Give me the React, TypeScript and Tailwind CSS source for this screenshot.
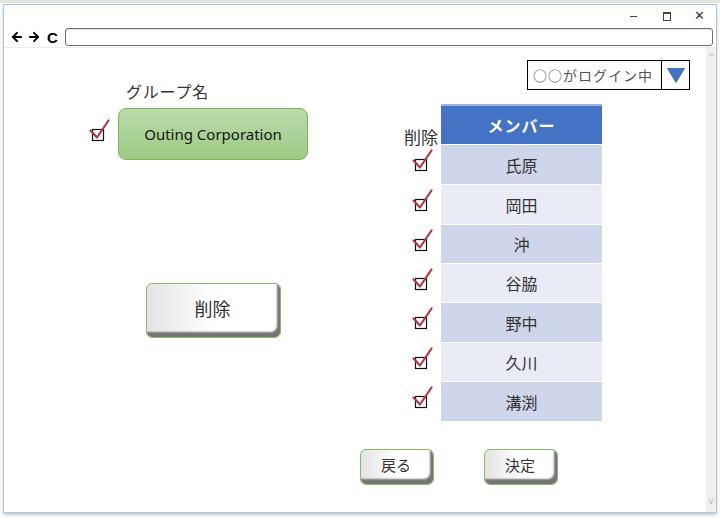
import React from "react";
import { ArrowLeft, ArrowRight } from "lucide-react";

const jp = "font-['Noto_Sans_CJK_JP',sans-serif]";

const members = [
  { name: "氏原", h: "h-[40px]", bg: "bg-[#cfd5ea]" },
  { name: "岡田", h: "h-[40px]", bg: "bg-[#e9ebf5]" },
  { name: "沖", h: "h-[39px]", bg: "bg-[#cfd5ea]" },
  { name: "谷脇", h: "h-[39px]", bg: "bg-[#e9ebf5]" },
  { name: "野中", h: "h-[40px]", bg: "bg-[#cfd5ea]" },
  { name: "久川", h: "h-[39px]", bg: "bg-[#e9ebf5]" },
  { name: "溝渕", h: "h-[40px]", bg: "bg-[#cfd5ea]" },
];

function Check() {
  return (
    <svg width="22" height="30" viewBox="0 0 22 30" className="shrink-0">
      <rect x="3.5" y="10.5" width="11" height="11" fill="white" stroke="#111" strokeWidth="1.2" />
      <path d="M1.5 11.5 L8 18.5 L19.5 1.5" fill="none" stroke="#ad3b47" strokeWidth="2.2" strokeLinecap="round" strokeLinejoin="round" />
    </svg>
  );
}

function Btn3d({ label, className }: { label: string; className: string }) {
  return (
    <button
      className={`${className} ${jp} flex items-center justify-center rounded-[6px] border border-[#86bd68] bg-gradient-to-r from-[#e4e4e4] via-white to-white text-[#333] shadow-[inset_-4px_-6px_2px_-1px_#747474]`}
    >
      <span className="-mt-[4px] -ml-[2px]">{label}</span>
    </button>
  );
}

export default function App() {
  return (
    <div className="w-[720px] h-[518px] bg-white overflow-hidden">
      <div className="h-[3px] bg-[#e4e4e4]" />
      <div className="ml-[3px] mt-[1px] w-[714px] h-[509px] border border-[#a9c8e8] bg-white shadow-[0_2px_3px_rgba(0,0,0,0.22)] flex flex-col">
        {/* title bar */}
        <div className="h-[22px] flex justify-end items-center text-[#333] font-['Liberation_Sans',sans-serif]">
          <span className="w-[33px] flex justify-center">
            <span className="w-[7px] h-px bg-[#444]" />
          </span>
          <span className="w-[33px] flex justify-center">
            <span className="w-[8px] h-[9px] border border-[#444] border-t-2" />
          </span>
          <span className="w-[33px] text-center text-[13px]">✕</span>
        </div>
        {/* nav bar */}
        <div className="h-[21px] flex items-center pl-[6px] pr-[3px] border-b border-[#ececec]">
          <ArrowLeft size={14} strokeWidth={3.4} className="text-black" />
          <ArrowRight size={14} strokeWidth={3.4} className="text-black ml-[3px]" />
          <span className="ml-[6px] text-[15px] font-bold leading-none font-['Liberation_Sans',sans-serif]">C</span>
          <div className="ml-[7px] flex-1 h-[18px] rounded-[3px] border border-[#6f6f6f] shadow-[inset_0_1px_1px_rgba(0,0,0,0.1)]" />
        </div>
        {/* content */}
        <div className="flex-1 flex">
          <div className="flex-1 pt-[12px] pl-[85px] flex flex-col">
            <div className="flex items-start">
              {/* left column */}
              <div className="w-[315px] flex flex-col">
                <div className={`${jp} mt-[21px] pl-[37px] text-[16px] leading-[20px] tracking-[0.8px] text-[#333]`}>グループ名</div>
                <div className="mt-[7px] flex items-center">
                  <Check />
                  <div className="ml-[7px] w-[190px] h-[52px] rounded-[8px] border border-[#7ab55a] bg-gradient-to-b from-[#badcab] to-[#9cca84] flex items-center justify-center">
                    <span className="text-[15px] text-[#151515] font-['Noto_Sans',sans-serif]">Outing Corporation</span>
                  </div>
                </div>
                <Btn3d label="削除" className="mt-[123px] ml-[57px] w-[135px] h-[55px] text-[18px]" />
              </div>
              {/* right column */}
              <div className="w-[286px] flex flex-col">
                <div className="self-end w-[163px] h-[30px] border border-black flex">
                  <div className={`${jp} flex-1 flex items-center pl-[5px] text-[14px] text-[#555] tracking-[1px]`}>○○がログイン中</div>
                  <div className="w-[28px] border-l border-black flex items-center justify-center">
                    <svg width="18" height="15" viewBox="0 0 18 15">
                      <polygon points="0.5,0.5 17.5,0.5 9,14.5" fill="#4472c4" stroke="#3a62ad" strokeWidth="0.8" />
                    </svg>
                  </div>
                </div>
                <div className="mt-[14px] flex">
                  <div className="w-[37px] flex flex-col">
                    <div className={`${jp} h-[40px] pt-[23px] text-[17px] leading-[20px] text-[#333] whitespace-nowrap`}>削除</div>
                    {members.map((m) => (
                      <div key={m.name} className={`${m.h} flex items-center pl-[8px]`}>
                        <Check />
                      </div>
                    ))}
                  </div>
                  <div className="w-[161px] flex flex-col">
                    <div className={`${jp} h-[40px] bg-[#4472c4] border-t-2 border-[#9db4e0] flex items-center justify-center text-white font-bold text-[16px] tracking-[1px]`}>
                      メンバー
                    </div>
                    {members.map((m) => (
                      <div key={m.name} className={`${m.h} ${m.bg} border-t border-white flex items-center justify-center ${jp} text-[16px] text-[#333]`}>
                        {m.name}
                      </div>
                    ))}
                  </div>
                </div>
              </div>
            </div>
            {/* bottom buttons */}
            <div className="mt-[28px] ml-[271px] flex gap-[50px]">
              <Btn3d label="戻る" className="w-[74px] h-[36px] text-[15px]" />
              <Btn3d label="決定" className="w-[74px] h-[36px] text-[15px]" />
            </div>
          </div>
          {/* scrollbar */}
          <div className="w-[10px] bg-[#f0f0f0] flex flex-col justify-between items-center py-[4px] text-[8px] text-[#b0b0b0] font-['DejaVu_Sans',sans-serif]">
            <span>^</span>
            <span>v</span>
          </div>
        </div>
      </div>
    </div>
  );
}
